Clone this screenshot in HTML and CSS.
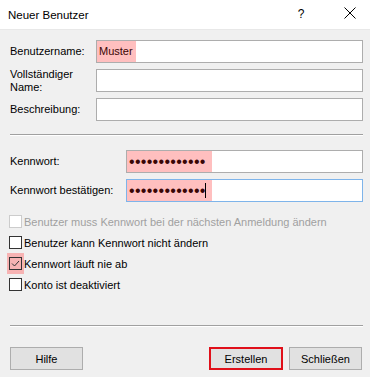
FILE: index.html
```html
<!DOCTYPE html>
<html lang="de">
<head>
    <meta charset="UTF-8">
    <title>Neuer Benutzer</title>
    <link rel="stylesheet" href="styles.css">
</head>
<body>
<div class="titlebar">
    <span class="title">Neuer Benutzer</span>
    <span class="help">?</span>
    <span class="close">
        <svg width="12" height="12" viewBox="0 0 12 12"><path d="M0.5 0.5 L11.5 11.5 M11.5 0.5 L0.5 11.5" stroke="#000" stroke-width="1" fill="none"/></svg>
    </span>
</div>

<div class="dialog">
    <div class="fields">
        <label>Benutzername:</label>
        <div class="textbox"><span class="mark">Muster</span></div>
        <label>Vollständiger<br>Name:</label>
        <div class="textbox"></div>
        <label>Beschreibung:</label>
        <div class="textbox"></div>
    </div>

    <div class="sep sep-top"></div>

    <div class="fields pw-fields">
        <label>Kennwort:</label>
        <div class="textbox"><span class="mark pw">•••••••••••••</span></div>
        <label>Kennwort bestätigen:</label>
        <div class="textbox focus"><span class="mark pw">•••••••••••••<i class="caret"></i></span></div>
    </div>

    <div class="checks">
        <div class="check disabled"><span class="box"></span>Benutzer muss Kennwort bei der nächsten Anmeldung ändern</div>
        <div class="check"><span class="box"></span>Benutzer kann Kennwort nicht ändern</div>
        <div class="check"><span class="box-mark"><span class="box checked">
            <svg width="11" height="11" viewBox="0 0 11 11"><path d="M2 5.5 L4.5 8 L9 3" stroke="#333" stroke-width="1" fill="none"/></svg>
        </span></span>Kennwort läuft nie ab</div>
        <div class="check"><span class="box"></span>Konto ist deaktiviert</div>
    </div>

    <div class="sep sep-bottom"></div>

    <div class="buttons">
        <button class="btn">Hilfe</button>
        <span class="spacer"></span>
        <button class="btn btn-create">Erstellen</button>
        <button class="btn">Schließen</button>
    </div>
</div>
</body>
</html>
```

FILE: styles.css
```css
body {
    margin: 0;
    width: 370px;
    height: 377px;
    overflow: hidden;
    background: #f0f0f0;
    font-family: "Liberation Sans", Arial, sans-serif;
    font-size: 11px;
    color: #000;
}
.titlebar {
    height: 29px;
    background: #fff;
    border-bottom: 1px solid #e8e8e8;
    display: flex;
    align-items: center;
    padding-left: 8px;
}
.title {
    flex: 1;
    font-size: 11.5px;
}
.help {
    width: 12px;
    text-align: center;
    font-size: 12px;
    margin-right: 37px;
    margin-top: -2px;
}
.close {
    width: 12px;
    height: 12px;
    margin-right: 14px;
    margin-top: -3px;
}
.close svg { display: block; }
.dialog {
    padding: 10px 7px 0 10px;
}
.fields {
    display: grid;
    grid-template-columns: 86px 1fr;
    grid-auto-rows: 23px;
    row-gap: 6px;
    align-items: center;
}
.fields label {
    line-height: 13px;
}
.pw-fields {
    grid-template-columns: 116px 1fr;
}
.textbox {
    height: 21px;
    background: #fff;
    border: 1px solid #adadad;
    display: flex;
}
.textbox.focus {
    border-color: #7eb4ea;
}
.mark {
    background: #ffbfbf;
    color: #3a0606;
    display: flex;
    align-items: center;
    padding: 0 3px 0 2px;
    line-height: 21px;
}
.mark.pw {
    width: 80px;
    padding-left: 2px;
    padding-right: 3px;
    font-size: 16px;
    letter-spacing: 0.3px;
    overflow: hidden;
    white-space: nowrap;
}
.caret {
    display: inline-block;
    width: 1px;
    height: 15px;
    background: #000;
    margin-left: -0.5px;
}
.sep {
    border-top: 1px solid #a0a0a0;
    border-bottom: 1px solid #fff;
}
.sep-top {
    margin: 13px 0 14px;
}
.sep-bottom {
    margin: 30px 0 20px;
}
.checks {
    margin-top: 9px;
    margin-left: -1px;
}
.check {
    height: 21px;
    display: flex;
    align-items: center;
}
.box {
    width: 11px;
    height: 11px;
    border: 1px solid #333;
    background: #fff;
    margin-right: 2px;
    display: flex;
}
.check.disabled {
    color: #a0a0a0;
}
.check.disabled .box {
    border-color: #cccccc;
}
.box-mark {
    background: #f7b3b3;
    padding: 4px 2px;
    margin: -4px 0 -4px -2px;
    display: flex;
}
.box-mark .box {
    background: transparent;
    margin-right: 0;
}
.buttons {
    display: flex;
    gap: 6px;
    margin-right: 1px;
}
.spacer {
    flex: 1;
}
.btn {
    height: 23px;
    width: 73px;
    background: #e1e1e1;
    border: 1px solid #adadad;
    font-family: "Liberation Sans", Arial, sans-serif;
    font-size: 11px;
    color: #000;
    padding: 0;
}
.btn-create {
    width: 74px;
    border: 2px solid #e0101a;
}
```
